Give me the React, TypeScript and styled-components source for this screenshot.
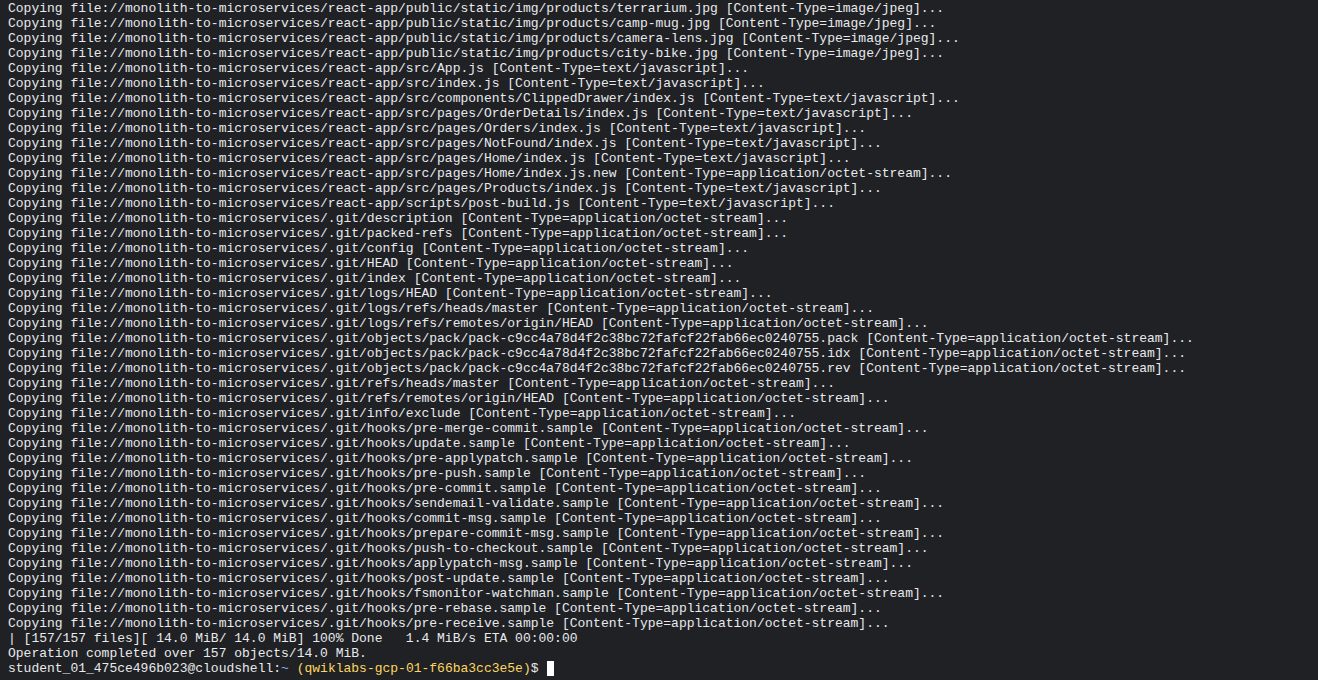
import * as React from 'react';
import styled, { createGlobalStyle } from 'styled-components';

const GlobalStyle = createGlobalStyle`
  html, body {
    margin: 0;
    padding: 0;
    background: #202124;
  }
`

const Terminal = styled.div`
  width: 1318px;
  height: 680px;
  box-sizing: border-box;
  padding: 1px 8px 0 8px;
  background: #202124;
  color: #e8eaed;
  font-family: "Liberation Mono", "Courier New", monospace;
  font-size: 13px;
  line-height: 15px;
  overflow: hidden;
`

const Line = styled.div`
  white-space: pre;
  height: 15px;
`

const Tilde = styled.span`
  color: #8ab4f8;
`

const Project = styled.span`
  color: #fdd663;
`

const Cursor = styled.span`
  display: inline-block;
  width: 7px;
  height: 15px;
  background: #ffffff;
  vertical-align: top;
  margin-left: 1px;
`

const base = 'Copying file://monolith-to-microservices/'
const js = '[Content-Type=text/javascript]...'
const jpeg = '[Content-Type=image/jpeg]...'
const bin = '[Content-Type=application/octet-stream]...'
const hash = 'pack-c9cc4a78d4f2c38bc72fafcf22fab66ec0240755'

const copied: [string, string][] = [
  ['react-app/public/static/img/products/terrarium.jpg', jpeg],
  ['react-app/public/static/img/products/camp-mug.jpg', jpeg],
  ['react-app/public/static/img/products/camera-lens.jpg', jpeg],
  ['react-app/public/static/img/products/city-bike.jpg', jpeg],
  ['react-app/src/App.js', js],
  ['react-app/src/index.js', js],
  ['react-app/src/components/ClippedDrawer/index.js', js],
  ['react-app/src/pages/OrderDetails/index.js', js],
  ['react-app/src/pages/Orders/index.js', js],
  ['react-app/src/pages/NotFound/index.js', js],
  ['react-app/src/pages/Home/index.js', js],
  ['react-app/src/pages/Home/index.js.new', bin],
  ['react-app/src/pages/Products/index.js', js],
  ['react-app/scripts/post-build.js', js],
  ['.git/description', bin],
  ['.git/packed-refs', bin],
  ['.git/config', bin],
  ['.git/HEAD', bin],
  ['.git/index', bin],
  ['.git/logs/HEAD', bin],
  ['.git/logs/refs/heads/master', bin],
  ['.git/logs/refs/remotes/origin/HEAD', bin],
  [`.git/objects/pack/${hash}.pack`, bin],
  [`.git/objects/pack/${hash}.idx`, bin],
  [`.git/objects/pack/${hash}.rev`, bin],
  ['.git/refs/heads/master', bin],
  ['.git/refs/remotes/origin/HEAD', bin],
  ['.git/info/exclude', bin],
  ['.git/hooks/pre-merge-commit.sample', bin],
  ['.git/hooks/update.sample', bin],
  ['.git/hooks/pre-applypatch.sample', bin],
  ['.git/hooks/pre-push.sample', bin],
  ['.git/hooks/pre-commit.sample', bin],
  ['.git/hooks/sendemail-validate.sample', bin],
  ['.git/hooks/commit-msg.sample', bin],
  ['.git/hooks/prepare-commit-msg.sample', bin],
  ['.git/hooks/push-to-checkout.sample', bin],
  ['.git/hooks/applypatch-msg.sample', bin],
  ['.git/hooks/post-update.sample', bin],
  ['.git/hooks/fsmonitor-watchman.sample', bin],
  ['.git/hooks/pre-rebase.sample', bin],
  ['.git/hooks/pre-receive.sample', bin],
]

export default function App() {
  return (
    <>
      <GlobalStyle />
      <Terminal>
        {copied.map(([path, type], i) => (
          <Line key={i}>{`${base}${path} ${type}`}</Line>
        ))}
        <Line>{'| [157/157 files][ 14.0 MiB/ 14.0 MiB] 100% Done   1.4 MiB/s ETA 00:00:00'}</Line>
        <Line>Operation completed over 157 objects/14.0 MiB.</Line>
        <Line>
          student_01_475ce496b023@cloudshell:<Tilde>~</Tilde> <Project>(qwiklabs-gcp-01-f66ba3cc3e5e)</Project>$ <Cursor />
        </Line>
      </Terminal>
    </>
  )
}
